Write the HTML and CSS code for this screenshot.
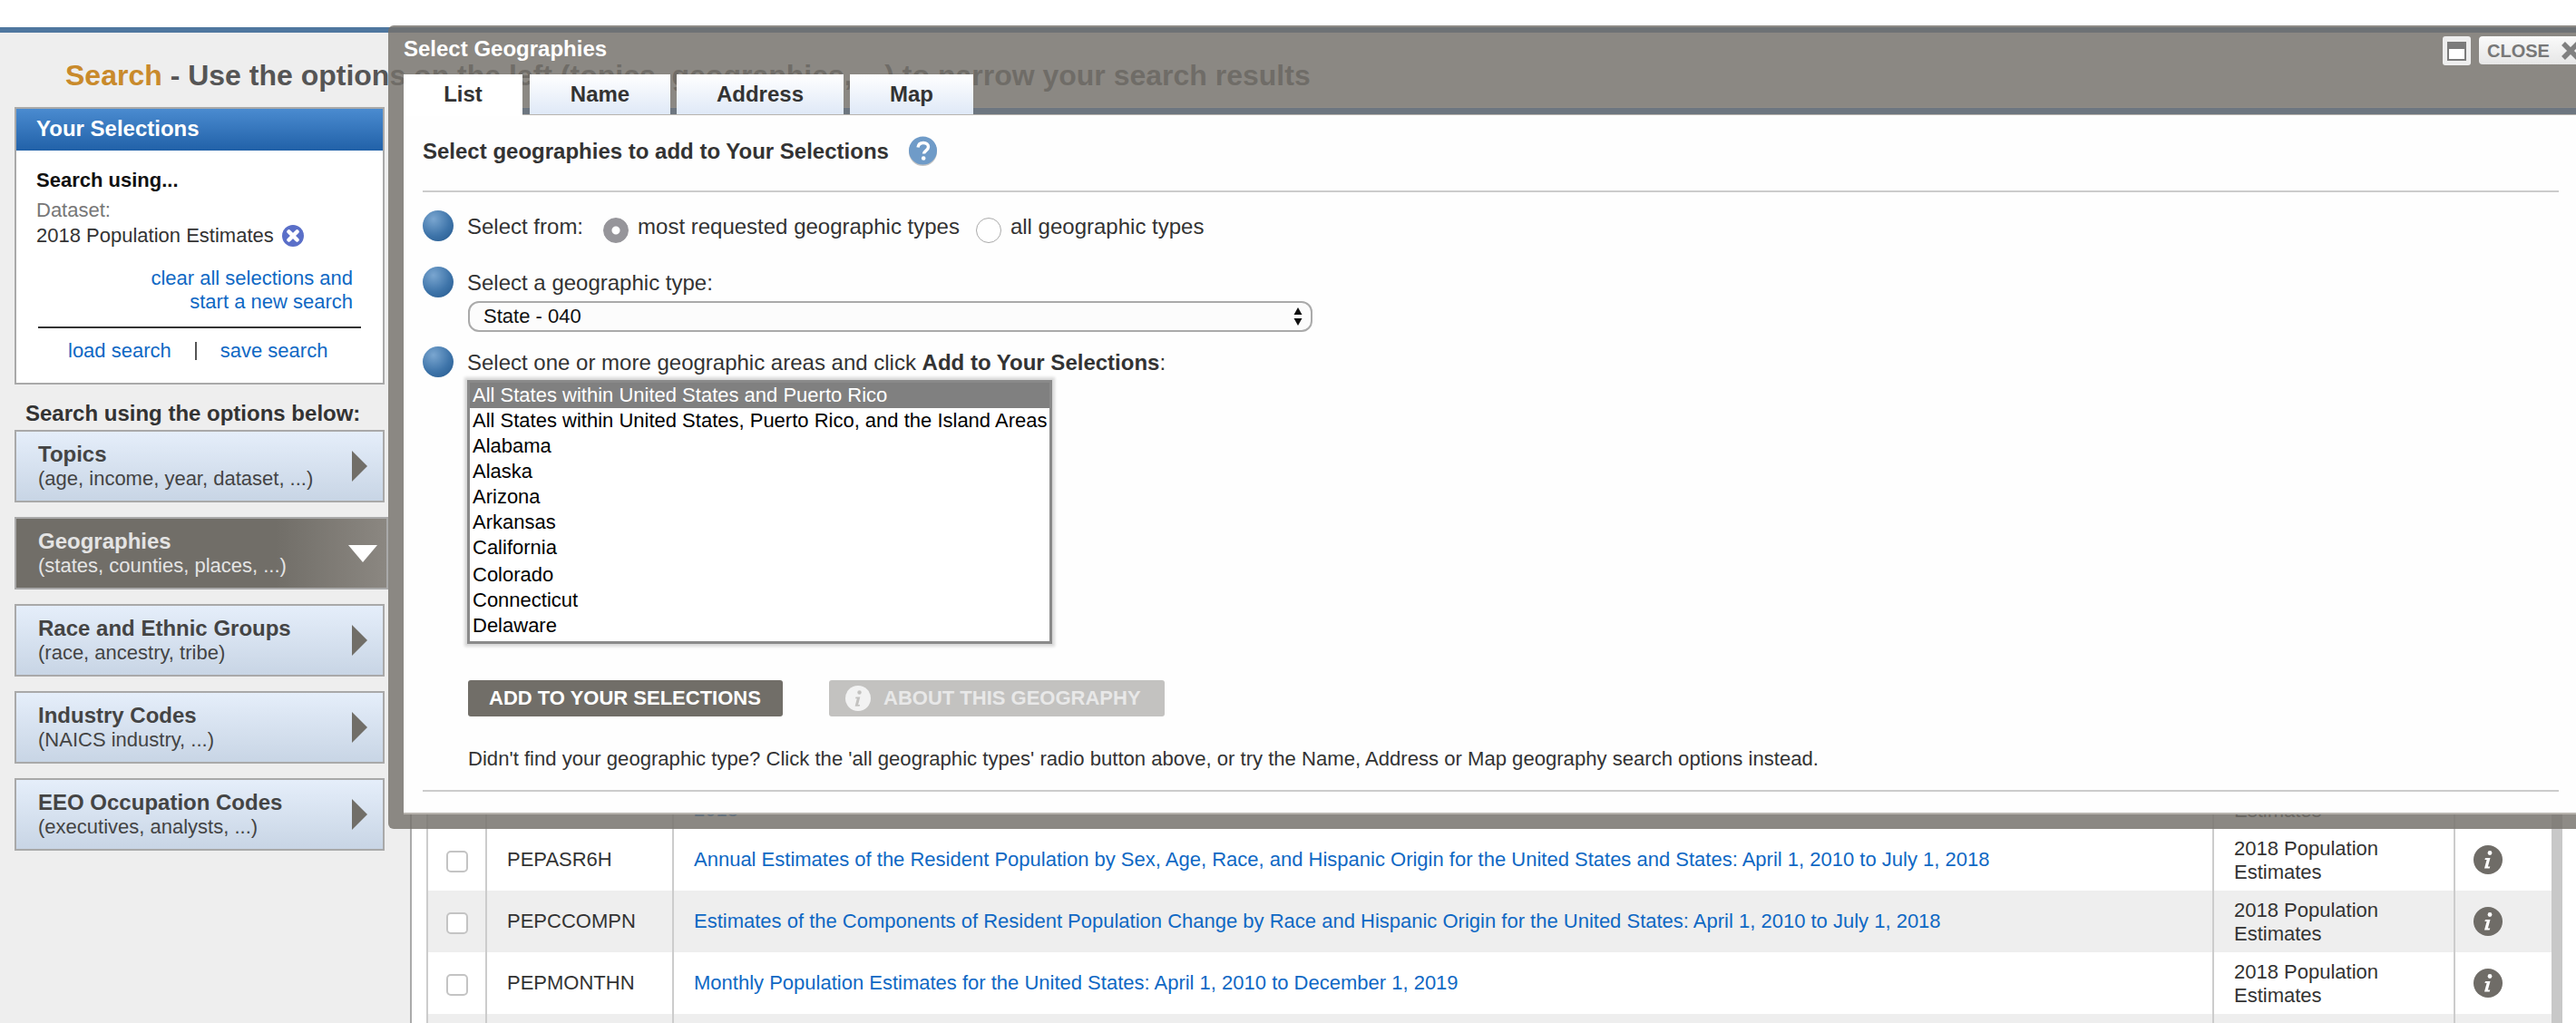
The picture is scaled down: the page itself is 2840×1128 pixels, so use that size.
FILE: index.html
```html
<!DOCTYPE html>
<html lang="en">
<head>
    <meta charset="UTF-8">
    <title>Advanced Search</title>
    <link rel="stylesheet" href="styles.css">
</head>
<body>
    <div class="topbar"></div>

    <h1 class="page-title"><span class="page-title-em">Search</span> - Use the options on the left (topics, geographies, ...) to narrow your search results</h1>

    <div class="page">
        <div class="sidebar">
            <div class="selections">
                <div class="selections-head">Your Selections</div>
                <div class="selections-body">
                    <div class="using">Search using...</div>
                    <div class="dataset-label">Dataset:</div>
                    <div class="dataset-value">2018 Population Estimates
                        <svg class="remove-icon" viewBox="0 0 24 24"><circle cx="12" cy="12" r="12" fill="#5a6fc8"/><path d="M7.5 7.5l9 9M16.5 7.5l-9 9" stroke="#fff" stroke-width="4.5" stroke-linecap="round"/></svg>
                    </div>
                    <a class="clear-link">clear all selections and<br>start a new search</a>
                    <div class="selections-rule"></div>
                    <div class="load-save">
                        <a>load search</a>
                        <span class="pipe"></span>
                        <a>save search</a>
                    </div>
                </div>
            </div>

            <div class="options-title">Search using the options below:</div>

            <div class="option">
                <div><b>Topics</b><br>(age, income, year, dataset, ...)</div>
                <span class="option-arrow"></span>
            </div>
            <div class="option option-active">
                <div><b>Geographies</b><br>(states, counties, places, ...)</div>
                <span class="option-arrow-down"></span>
            </div>
            <div class="option">
                <div><b>Race and Ethnic Groups</b><br>(race, ancestry, tribe)</div>
                <span class="option-arrow"></span>
            </div>
            <div class="option">
                <div><b>Industry Codes</b><br>(NAICS industry, ...)</div>
                <span class="option-arrow"></span>
            </div>
            <div class="option">
                <div><b>EEO Occupation Codes</b><br>(executives, analysts, ...)</div>
                <span class="option-arrow"></span>
            </div>
        </div>

        <div class="results">
            <table class="results-table">
                <tr>
                    <td class="col-check"><span class="checkbox"></span></td>
                    <td class="col-id">PEPASR5H</td>
                    <td class="col-title"><a>Annual Estimates of the Resident Population by Sex, Race, and Hispanic Origin for the United States, States, and Counties: April 1, 2010 to July 1,<br>2018</a></td>
                    <td class="col-set">2018 Population Estimates</td>
                    <td class="col-info"></td>
                </tr>
                <tr>
                    <td class="col-check"><span class="checkbox"></span></td>
                    <td class="col-id">PEPASR6H</td>
                    <td class="col-title"><a>Annual Estimates of the Resident Population by Sex, Age, Race, and Hispanic Origin for the United States and States: April 1, 2010 to July 1, 2018</a></td>
                    <td class="col-set">2018 Population Estimates</td>
                    <td class="col-info"><svg class="info-icon" viewBox="0 0 32 32"><circle cx="16" cy="16" r="16" fill="#6f6c67"/><circle cx="18" cy="8.5" r="2.4" fill="#fff"/><path d="M13 14h5.5l-2.6 9.5h2.4l-.6 2H12l2.6-9.5h-2.2z" fill="#fff"/></svg></td>
                </tr>
                <tr>
                    <td class="col-check"><span class="checkbox"></span></td>
                    <td class="col-id">PEPCCOMPN</td>
                    <td class="col-title"><a>Estimates of the Components of Resident Population Change by Race and Hispanic Origin for the United States: April 1, 2010 to July 1, 2018</a></td>
                    <td class="col-set">2018 Population Estimates</td>
                    <td class="col-info"><svg class="info-icon" viewBox="0 0 32 32"><circle cx="16" cy="16" r="16" fill="#6f6c67"/><circle cx="18" cy="8.5" r="2.4" fill="#fff"/><path d="M13 14h5.5l-2.6 9.5h2.4l-.6 2H12l2.6-9.5h-2.2z" fill="#fff"/></svg></td>
                </tr>
                <tr>
                    <td class="col-check"><span class="checkbox"></span></td>
                    <td class="col-id">PEPMONTHN</td>
                    <td class="col-title"><a>Monthly Population Estimates for the United States: April 1, 2010 to December 1, 2019</a></td>
                    <td class="col-set">2018 Population Estimates</td>
                    <td class="col-info"><svg class="info-icon" viewBox="0 0 32 32"><circle cx="16" cy="16" r="16" fill="#6f6c67"/><circle cx="18" cy="8.5" r="2.4" fill="#fff"/><path d="M13 14h5.5l-2.6 9.5h2.4l-.6 2H12l2.6-9.5h-2.2z" fill="#fff"/></svg></td>
                </tr>
                <tr>
                    <td class="col-check"></td>
                    <td class="col-id"></td>
                    <td class="col-title"></td>
                    <td class="col-set"></td>
                    <td class="col-info"></td>
                </tr>
            </table>
        </div>
    </div>

    <!-- Select Geographies dialog -->
    <div class="dialog">
        <div class="dialog-titlebar">
            <div class="dialog-title">Select Geographies</div>
            <div class="dialog-window">
                <svg viewBox="0 0 21 21" width="21" height="21"><rect x="1" y="1" width="19" height="19" fill="#fff" stroke="#7b7b7b" stroke-width="2"/><rect x="1" y="1" width="19" height="7" fill="#7b7b7b"/></svg>
            </div>
            <div class="dialog-close">CLOSE
                <svg viewBox="0 0 22 22" width="22" height="22"><path d="M3 3l16 16M19 3L3 19" stroke="#808080" stroke-width="5.5"/></svg>
            </div>
        </div>

        <div class="tabs">
            <div class="tab tab-current">List</div>
            <div class="tab tab-name">Name</div>
            <div class="tab tab-address">Address</div>
            <div class="tab tab-map">Map</div>
        </div>

        <div class="dialog-body">
            <div class="dialog-head">
                <b>Select geographies to add to Your Selections</b>
                <svg class="help-icon" viewBox="0 0 33 33"><circle cx="16.5" cy="17.5" r="15.5" fill="#c4c4c4"/><circle cx="16.5" cy="16" r="15.5" fill="#6f9bc8"/><path d="M11 12.5c.5-3.5 3-5 6-5 3.5 0 5.5 2 5.5 4.5 0 4-5 4-5 7.5" fill="none" stroke="#fff" stroke-width="3.4"/><circle cx="17.2" cy="24.5" r="2.3" fill="#fff"/></svg>
            </div>
            <div class="rule"></div>

            <div class="step step-from">
                <span class="ball"></span>
                <span class="step-from-label">Select from:</span>
                <span class="radio radio-on"></span>
                <span class="radio-label">most requested geographic types</span>
                <span class="radio"></span>
                <span>all geographic types</span>
            </div>

            <div class="step step-type">
                <span class="ball"></span>
                <span>Select a geographic type:</span>
            </div>
            <div class="fake-select">
                <span>State - 040</span>
                <svg viewBox="0 0 10 20" width="10" height="20"><path d="M5 0l4.5 8h-9zM5 20L.5 12h9z" fill="#111"/></svg>
            </div>

            <div class="step step-areas">
                <span class="ball"></span>
                <span>Select one or more geographic areas and click <b>Add to Your Selections</b>:</span>
            </div>
            <div class="listbox">
                <div class="listbox-item listbox-item-selected">All States within United States and Puerto Rico</div>
                <div class="listbox-item">All States within United States, Puerto Rico, and the Island Areas</div>
                <div class="listbox-item">Alabama</div>
                <div class="listbox-item">Alaska</div>
                <div class="listbox-item">Arizona</div>
                <div class="listbox-item">Arkansas</div>
                <div class="listbox-item">California</div>
                <div class="listbox-item">Colorado</div>
                <div class="listbox-item">Connecticut</div>
                <div class="listbox-item">Delaware</div>
            </div>

            <div class="dialog-buttons">
                <div class="btn btn-add">ADD TO YOUR SELECTIONS</div>
                <div class="btn btn-about">
                    <svg viewBox="0 0 28 28" width="28" height="28"><circle cx="14" cy="14" r="14" fill="#f2f2f2"/><circle cx="15.5" cy="7.5" r="2.2" fill="#c3c2c0"/><path d="M11.5 12.5h4.8l-2.2 8.5h2l-.5 1.8h-5l2.2-8.5h-1.8z" fill="#c3c2c0"/></svg>
                    ABOUT THIS GEOGRAPHY
                </div>
            </div>

            <div class="dialog-note">Didn't find your geographic type? Click the 'all geographic types' radio button above, or try the Name, Address or Map geography search options instead.</div>
            <div class="rule rule-bottom"></div>
        </div>
    </div>
</body>
</html>
```

FILE: styles.css
```css
html, body {
    margin: 0;
    padding: 0;
    height: 1128px;
    overflow: hidden;
}
body {
    background-color: #eeeeee;
    font-family: "Liberation Sans", Arial, sans-serif;
    font-size: 22px;
    line-height: 26px;
    color: #333;
}
a {
    color: #0f68c4;
}
.topbar {
    height: 30px;
    background: #fff;
    border-bottom: 6px solid #4f779f;
}
.page-title {
    margin: 0;
    padding: 27px 0 15px 72px;
    font-size: 32px;
    line-height: 40px;
    font-weight: bold;
    color: #555;
}
.page-title-em {
    color: #c98a2b;
}
.page {
    display: flex;
    height: 1010px;
    overflow: hidden;
}

/* left column */
.sidebar {
    width: 408px;
    margin-left: 16px;
    flex-shrink: 0;
}
.selections {
    border: 2px solid #a9a9a9;
    background: #fff;
}
.selections-head {
    height: 46px;
    padding-left: 22px;
    font-size: 24px;
    font-weight: bold;
    line-height: 44px;
    color: #fff;
    background: linear-gradient(#4a8bd0, #2161a8);
}
.selections-body {
    padding: 20px 24px 22px 22px;
}
.using {
    font-weight: bold;
    color: #111;
}
.dataset-label {
    margin-top: 6px;
    line-height: 28px;
    color: #777;
}
.dataset-value {
    display: flex;
    align-items: center;
    line-height: 28px;
    gap: 9px;
}
.remove-icon {
    width: 24px;
    height: 24px;
}
.clear-link {
    display: block;
    margin: 20px 9px 0 0;
    text-align: right;
}
.selections-rule {
    margin: 14px 0 0 2px;
    border-top: 2px solid #333;
}
.load-save {
    display: flex;
    align-items: center;
    gap: 26px;
    margin-top: 12px;
    padding-left: 35px;
}
.pipe {
    width: 2px;
    height: 20px;
    background: #555;
}
.options-title {
    margin: 18px 0 4px 12px;
    font-size: 24px;
    font-weight: bold;
    line-height: 28px;
}
.option {
    display: flex;
    justify-content: space-between;
    align-items: center;
    box-sizing: border-box;
    height: 80px;
    margin-bottom: 16px;
    padding: 0 17px 0 24px;
    border: 2px solid #a9a9a9;
    background: linear-gradient(#e5eefa, #c8d5e5);
    color: #444;
}
.option b {
    font-size: 24px;
}
.option-arrow {
    width: 0;
    height: 0;
    border-top: 17px solid transparent;
    border-bottom: 17px solid transparent;
    border-left: 17px solid #716e68;
}
.option-active {
    width: 412px;
    padding-right: 10px;
    background: linear-gradient(to right, #716e68 70%, #8b8781 100%);
    color: #e4e4e4;
}
.option-arrow-down {
    width: 0;
    height: 0;
    border-left: 16px solid transparent;
    border-right: 16px solid transparent;
    border-top: 19px solid #fff;
}

/* results table, mostly under the dialog */
.results {
    flex: 1;
    margin-left: 28px;
    padding: 728px 15px 0 16px;
    background: #fff;
    border-left: 2px solid #aaa;
}
.results-table {
    width: 100%;
    table-layout: fixed;
    border-collapse: separate;
    border-spacing: 0;
    border-left: 2px solid #ccc;
    border-right: 12px solid #c8c8c8;
}
.results-table td {
    height: 68px;
    padding: 0 0 0 22px;
    box-sizing: border-box;
    border-right: 2px solid #ccc;
    vertical-align: middle;
}
.results-table tr:nth-child(odd) td {
    background: #eee;
}
.results-table td.col-check {
    width: 65px;
    padding-left: 20px;
}
.results-table td.col-id {
    width: 206px;
}
.results-table td.col-set {
    width: 266px;
    padding-top: 2px;
}
.results-table td.col-info {
    width: 106px;
    padding-left: 20px;
    border-right: none;
}
.checkbox {
    display: block;
    box-sizing: border-box;
    width: 24px;
    height: 24px;
    margin-top: 4px;
    background: #fff;
    border: 2px solid #c4c4c4;
    border-radius: 5px;
}
.info-icon {
    display: block;
    width: 32px;
    height: 32px;
}

/* dialog */
.dialog {
    position: absolute;
    top: 28px;
    left: 428px;
    right: 0;
    padding: 0 0 16px 17px;
    background: rgba(117, 113, 107, 0.82);
    border-radius: 6px 0 0 6px;
}
.dialog-titlebar {
    display: flex;
    align-items: flex-start;
    height: 42px;
    padding-top: 12px;
}
.dialog-title {
    flex: 1;
    font-size: 24px;
    font-weight: bold;
    line-height: 28px;
    color: #fff;
}
.dialog-window {
    display: flex;
    justify-content: center;
    align-items: center;
    width: 31px;
    height: 32px;
    background: #eee;
    border-radius: 3px;
}
.dialog-close {
    display: flex;
    align-items: center;
    gap: 12px;
    box-sizing: border-box;
    width: 122px;
    height: 31px;
    margin: 0 -15px 0 9px;
    padding-left: 9px;
    font-size: 20px;
    font-weight: bold;
    color: #777;
    background: linear-gradient(#fafafa, #e6e6e6);
    border-radius: 4px;
}
.tabs {
    display: flex;
    gap: 7px;
    height: 45px;
    background: linear-gradient(transparent 37px, #6d7680 37px, #6d7680 44px, #b8b4ae 44px);
}
.tab {
    height: 44px;
    font-size: 24px;
    font-weight: bold;
    line-height: 44px;
    text-align: center;
    color: #333;
    background: linear-gradient(#fff, #dfe9f7);
}
.tab-current {
    width: 131px;
    height: 46px;
    margin-right: 1px;
    background: #fff;
}
.tab-name {
    width: 155px;
}
.tab-address {
    width: 184px;
}
.tab-map {
    width: 136px;
}
.dialog-body {
    padding: 23px 19px 23px 21px;
    background: #fefefe;
    border-bottom: 2px solid #b8b4ae;
}
.dialog-head {
    display: flex;
    align-items: center;
    gap: 21px;
    height: 33px;
    font-size: 24px;
}
.help-icon {
    width: 33px;
    height: 33px;
}
.rule {
    margin-top: 27px;
    border-top: 2px solid #ccc;
}
.rule-bottom {
    margin-top: 21px;
}
.step {
    display: flex;
    align-items: center;
    height: 34px;
    font-size: 24px;
}
.step span {
    padding-top: 2px;
}
.step-from {
    margin-top: 20px;
}
.step-type {
    margin-top: 28px;
}
.step-areas {
    margin-top: 16px;
}
.step .ball {
    box-sizing: border-box;
    padding: 0;
    width: 34px;
    height: 34px;
    margin-right: 15px;
    border-radius: 50%;
    background: radial-gradient(circle at 35% 28%, #7aa6d0, #3f75aa 55%, #23578c 100%);
}
.step-from-label {
    margin-right: 22px;
}
.step .radio {
    box-sizing: border-box;
    padding: 0;
    width: 28px;
    height: 28px;
    margin: 10px 10px 0 0;
    background: #fff;
    border: 1px solid #aaa;
    border-radius: 50%;
}
.step .radio-on {
    background: radial-gradient(circle, #fff 4px, #96959a 5px);
    border-color: #96959a;
}
.radio-label {
    margin-right: 18px;
}
.fake-select {
    display: flex;
    justify-content: space-between;
    align-items: center;
    box-sizing: border-box;
    width: 931px;
    height: 34px;
    margin: 4px 0 0 50px;
    padding: 0 9px 0 15px;
    color: #111;
    background: #fcfcfc;
    border: 2px solid #aaa;
    border-radius: 12px;
}
.listbox {
    box-sizing: border-box;
    width: 645px;
    margin: 3px 0 0 49px;
    padding-bottom: 3px;
    background: #fff;
    border: 3px solid #8a8a8a;
    box-shadow: 0 0 3px 3px #d8d8d8;
    color: #000;
}
.listbox-item {
    height: 28px;
    padding-left: 3px;
    line-height: 28px;
    white-space: nowrap;
}
.listbox-item:nth-child(8) {
    margin-top: 2px;
}
.listbox-item-selected {
    color: #fff;
    background: #808080;
}
.dialog-buttons {
    display: flex;
    gap: 51px;
    margin: 40px 0 0 50px;
}
.btn {
    display: flex;
    align-items: center;
    box-sizing: border-box;
    height: 40px;
    font-size: 22px;
    font-weight: bold;
    border-radius: 3px;
}
.btn-add {
    width: 347px;
    padding-left: 23px;
    color: #fff;
    background: #716e68;
}
.btn-about {
    gap: 14px;
    width: 370px;
    padding-left: 18px;
    color: #e8e8e8;
    background: #c3c2c0;
}
.dialog-note {
    margin: 34px 0 0 50px;
    font-size: 22.1px;
}
```
